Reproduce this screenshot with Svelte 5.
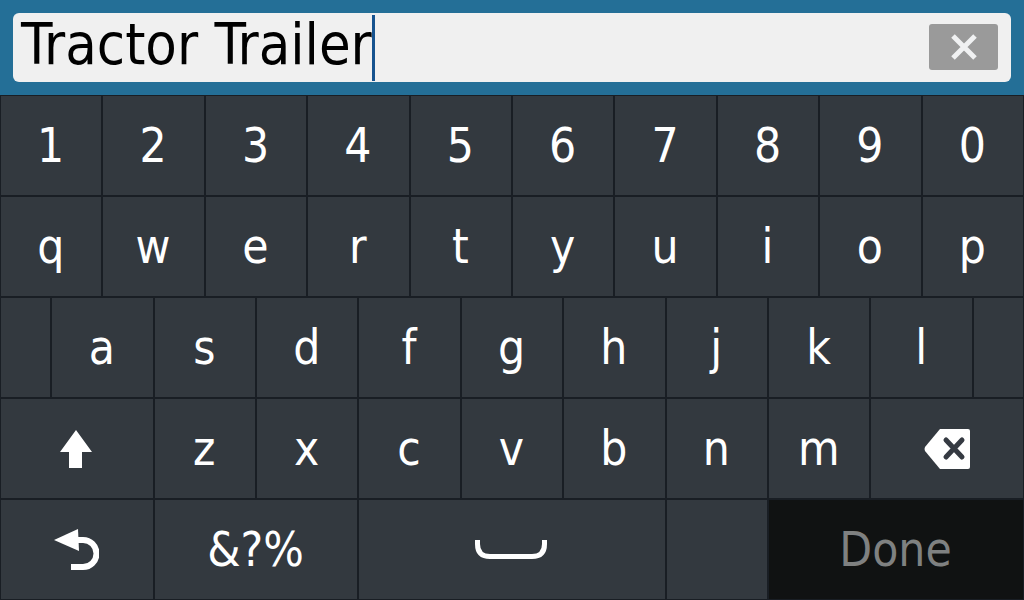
<script>
  const digits = ['1', '2', '3', '4', '5', '6', '7', '8', '9', '0'];
  const top = ['q', 'w', 'e', 'r', 't', 'y', 'u', 'i', 'o', 'p'];
  const home = ['a', 's', 'd', 'f', 'g', 'h', 'j', 'k', 'l'];
  const bottom = ['z', 'x', 'c', 'v', 'b', 'n', 'm'];

  let text = $state('Tractor Trailer');
</script>

<div class="screen">
  <header class="bar">
    <div class="field">
      <span class="value">{text}</span><span class="caret"></span>
      <button class="clear" aria-label="Clear" onclick={() => (text = '')}>
        <svg width="28" height="28" viewBox="0 0 28 28">
          <path d="M3 3 L25 25 M25 3 L3 25" stroke="#f0f1f2" stroke-width="5" fill="none" />
        </svg>
      </button>
    </div>
  </header>

  <div class="keys">
    {#each digits as k}
      <button class="key w2">{k}</button>
    {/each}
    {#each top as k}
      <button class="key w2">{k}</button>
    {/each}

    <button class="key w1" aria-label="Spacer"></button>
    {#each home as k}
      <button class="key w2">{k}</button>
    {/each}
    <button class="key w1" aria-label="Spacer"></button>

    <button class="key w3" aria-label="Shift">
      <svg width="34" height="40" viewBox="0 0 34 40">
        <path d="M17 1 L33 23 L23 23 L23 39 L10 39 L10 23 L1 23 Z" fill="#fff" />
      </svg>
    </button>
    {#each bottom as k}
      <button class="key w2">{k}</button>
    {/each}
    <button class="key w3" aria-label="Backspace">
      <svg width="46" height="40" viewBox="0 0 46 40">
        <path d="M16 0 L44 0 Q46 0 46 2 L46 38 Q46 40 44 40 L16 40 L1 22 Q0 20 1 18 Z" fill="#fff" />
        <path d="M22 11 L38 28 M38 11 L22 28" stroke="#353a42" stroke-width="5" stroke-linecap="round" fill="none" />
      </svg>
    </button>

    <button class="key w3" aria-label="Back">
      <svg width="46" height="42" viewBox="0 0 46 42">
        <path d="M1 11 L25 0 L26 22 Z" fill="#fff" />
        <path d="M20 11 L30 11 A13.5 13.5 0 0 1 30 38 L18 38" stroke="#fff" stroke-width="6" fill="none" />
      </svg>
    </button>
    <button class="key w4">&amp;?%</button>
    <button class="key w6" aria-label="Space">
      <svg width="72" height="20" viewBox="0 0 72 20">
        <path d="M2.5 0 L2.5 4 Q2.5 16.500 15 16.500 L57 16.500 Q69.500 16.500 69.500 4 L69.500 0" stroke="#fff" stroke-width="5" fill="none" />
      </svg>
    </button>
    <button class="key w2" aria-label="Empty"></button>
    <button class="key w5 done">Done</button>
  </div>
</div>

<style>
  :global(body) {
    margin: 0;
    background: #191e24;
  }

  .screen {
    width: 1024px;
    height: 600px;
    display: flex;
    flex-direction: column;
    font-family: "DejaVu Sans Condensed", "DejaVu Sans", sans-serif;
    font-stretch: condensed;
  }

  .bar {
    height: 95px;
    flex: none;
    box-sizing: border-box;
    padding: 13px 13px 13px;
    background: #246f97;
  }

  .field {
    height: 69px;
    box-sizing: border-box;
    display: flex;
    align-items: center;
    padding: 0 13px 0 8px;
    background: #f0f0f0;
    border-radius: 6px;
  }

  .value {
    font-size: 57.3px;
    line-height: 66px;
    color: #000;
    margin-bottom: 6px;
  }

  .caret {
    width: 3px;
    height: 66px;
    background: #17538f;
  }

  .clear {
    margin-left: auto;
    margin-bottom: 2px;
    width: 69px;
    height: 46px;
    padding: 0;
    border: none;
    border-radius: 3px;
    background: #9a9a9a;
    display: flex;
    align-items: center;
    justify-content: center;
  }

  .keys {
    flex: 1;
    display: grid;
    grid-template-columns: repeat(20, 1fr);
    grid-template-rows: repeat(5, 1fr);
    min-height: 0;
  }

  .key {
    box-sizing: border-box;
    min-width: 0;
    padding: 0 1px 0 0;
    border: 1px solid #191e24;
    background: #33393f;
    color: #fff;
    font-family: inherit;
    font-stretch: inherit;
    font-size: 47.5px;
    display: flex;
    align-items: center;
    justify-content: center;
  }

  .w1 { grid-column: span 1; }
  .w2 { grid-column: span 2; }
  .w3 { grid-column: span 3; }
  .w4 { grid-column: span 4; }
  .w5 { grid-column: span 5; }
  .w6 { grid-column: span 6; }

  .done {
    background: #101212;
    color: #7f8181;
  }
</style>
